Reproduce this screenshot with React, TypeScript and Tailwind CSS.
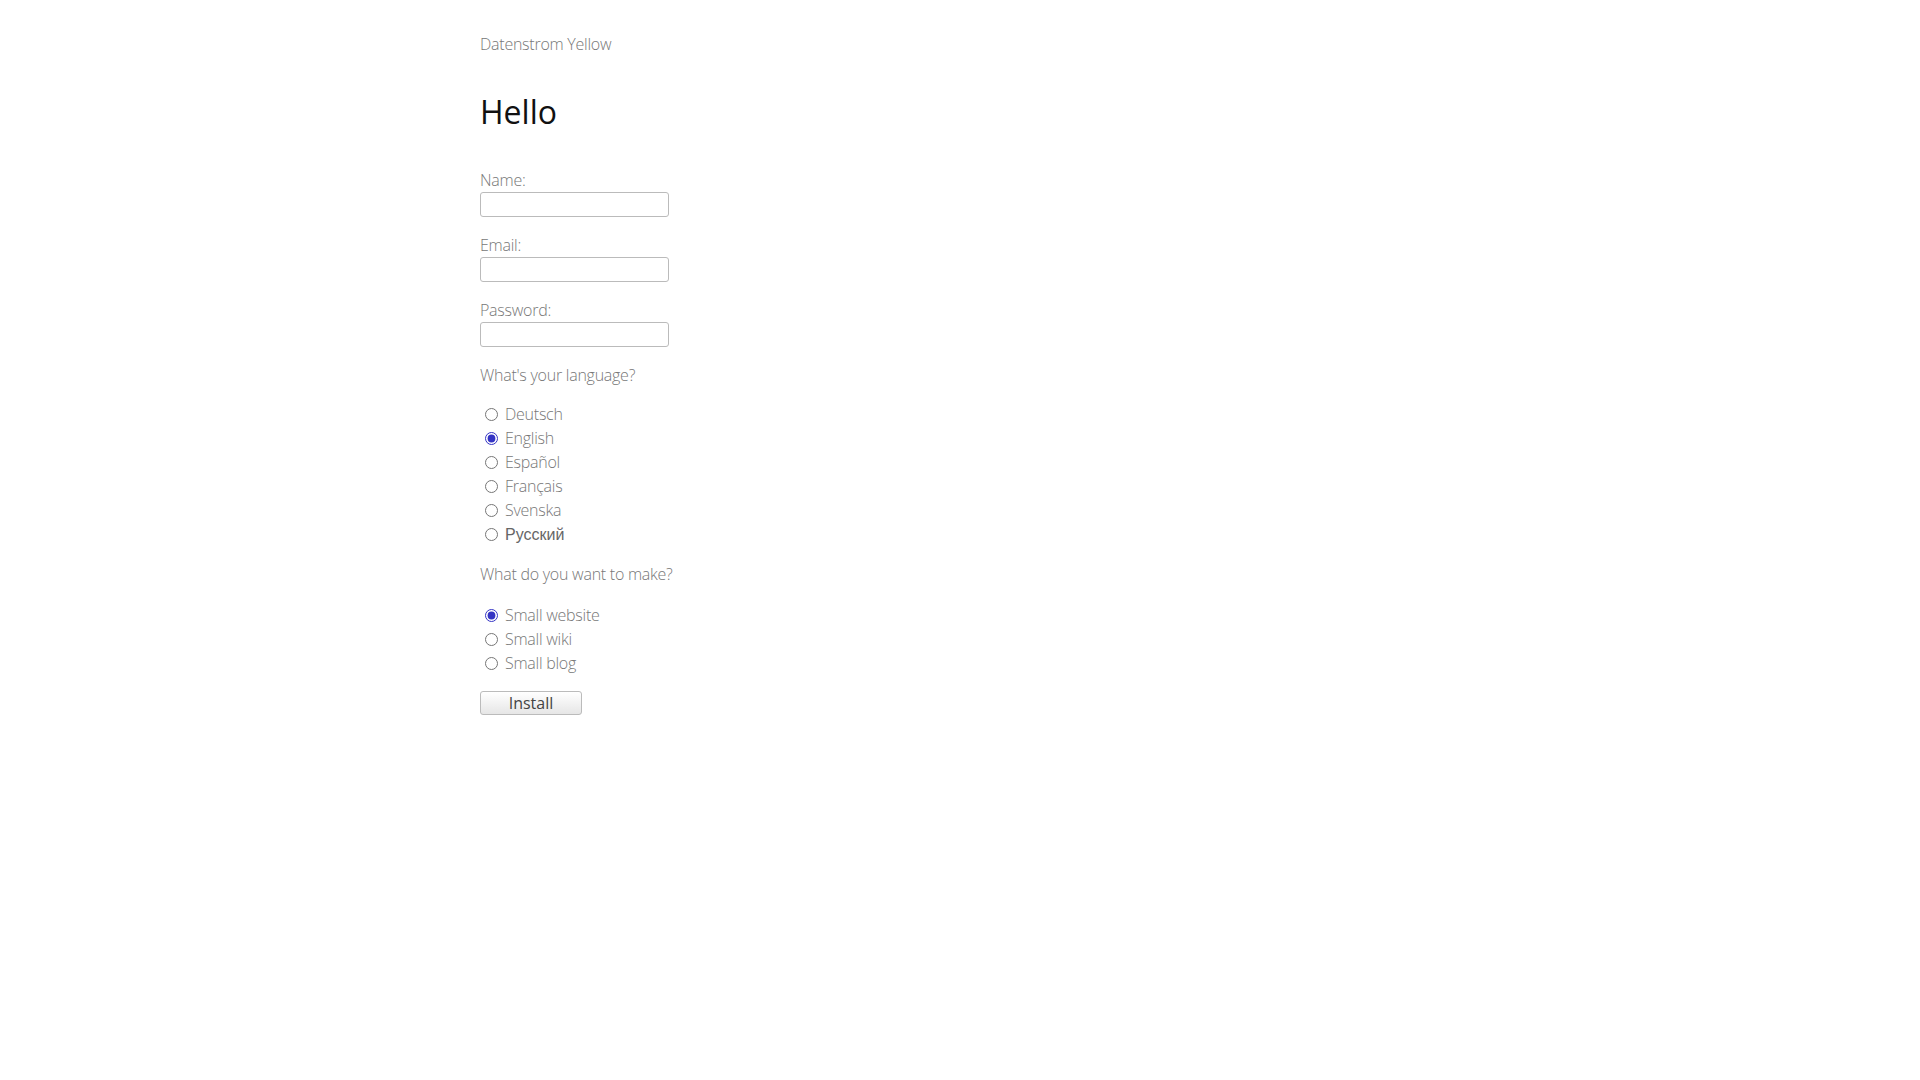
import { useState } from 'react';

const languages = [
  { id: 'de', label: 'Deutsch' },
  { id: 'en', label: 'English' },
  { id: 'es', label: 'Español' },
  { id: 'fr', label: 'Français' },
  { id: 'sv', label: 'Svenska' },
  { id: 'ru', label: 'Русский', fallback: true },
];

const extensions = [
  { id: 'website', label: 'Small website' },
  { id: 'wiki', label: 'Small wiki' },
  { id: 'blog', label: 'Small blog' },
];

interface RadioRowProps {
  name: string;
  value: string;
  label: string;
  checked: boolean;
  fallback?: boolean;
  onChange: (value: string) => void;
}

function RadioRow({ name, value, label, checked, fallback, onChange }: RadioRowProps) {
  return (
    <label className="flex h-6 items-start">
      <input
        type="radio"
        name={name}
        value={value}
        checked={checked}
        onChange={() => onChange(value)}
        className="m-0 ml-[5px] mr-[7px] mt-[6px] h-[13px] w-[13px] accent-[#3434c4]"
      />
      <span
        className={
          fallback
            ? "pt-px font-['Liberation_Sans',sans-serif] font-normal tracking-normal text-[#666]"
            : ''
        }
      >
        {label}
      </span>
    </label>
  );
}

function Field({ label, type = 'text' }: { label: string; type?: string }) {
  return (
    <div className="mb-4">
      <label className="block h-6">{label}</label>
      <input
        type={type}
        className="block h-[25px] w-[189px] rounded-[3px] border border-[#bbb] bg-white px-1 outline-none"
      />
    </div>
  );
}

export default function App() {
  const [language, setLanguage] = useState('en');
  const [extension, setExtension] = useState('website');

  return (
    <div className="min-h-screen bg-white font-['Open_Sans',sans-serif] text-base leading-6 font-light tracking-[-0.25px] text-[#777]">
      <div className="mx-auto max-w-[1000px] px-5 pt-[32px]">
        <div className="h-6">Datenstrom Yellow</div>

        <h1 className="mt-[32px] text-[32px] leading-[48px] font-normal tracking-normal text-[#111]">
          Hello
        </h1>

        <form className="mt-8" onSubmit={(e) => e.preventDefault()}>
          <Field label="Name:" />
          <Field label="Email:" />
          <Field label="Password:" type="password" />

          <p className="h-6">What's your language?</p>
          <div className="mt-[15px]">
            {languages.map((l) => (
              <RadioRow
                key={l.id}
                name="language"
                value={l.id}
                label={l.label}
                fallback={l.fallback}
                checked={language === l.id}
                onChange={setLanguage}
              />
            ))}
          </div>

          <p className="mt-[16px] h-6">What do you want to make?</p>
          <div className="mt-[17px]">
            {extensions.map((x) => (
              <RadioRow
                key={x.id}
                name="extension"
                value={x.id}
                label={x.label}
                checked={extension === x.id}
                onChange={setExtension}
              />
            ))}
          </div>

          <button
            type="submit"
            className="mt-[16px] block h-6 w-[102px] rounded-[3px] border border-[#bbb] bg-gradient-to-b from-white to-[#e6e6e6] text-base leading-[22px] font-normal tracking-normal text-[#444]"
          >
            Install
          </button>
        </form>
      </div>
    </div>
  );
}
